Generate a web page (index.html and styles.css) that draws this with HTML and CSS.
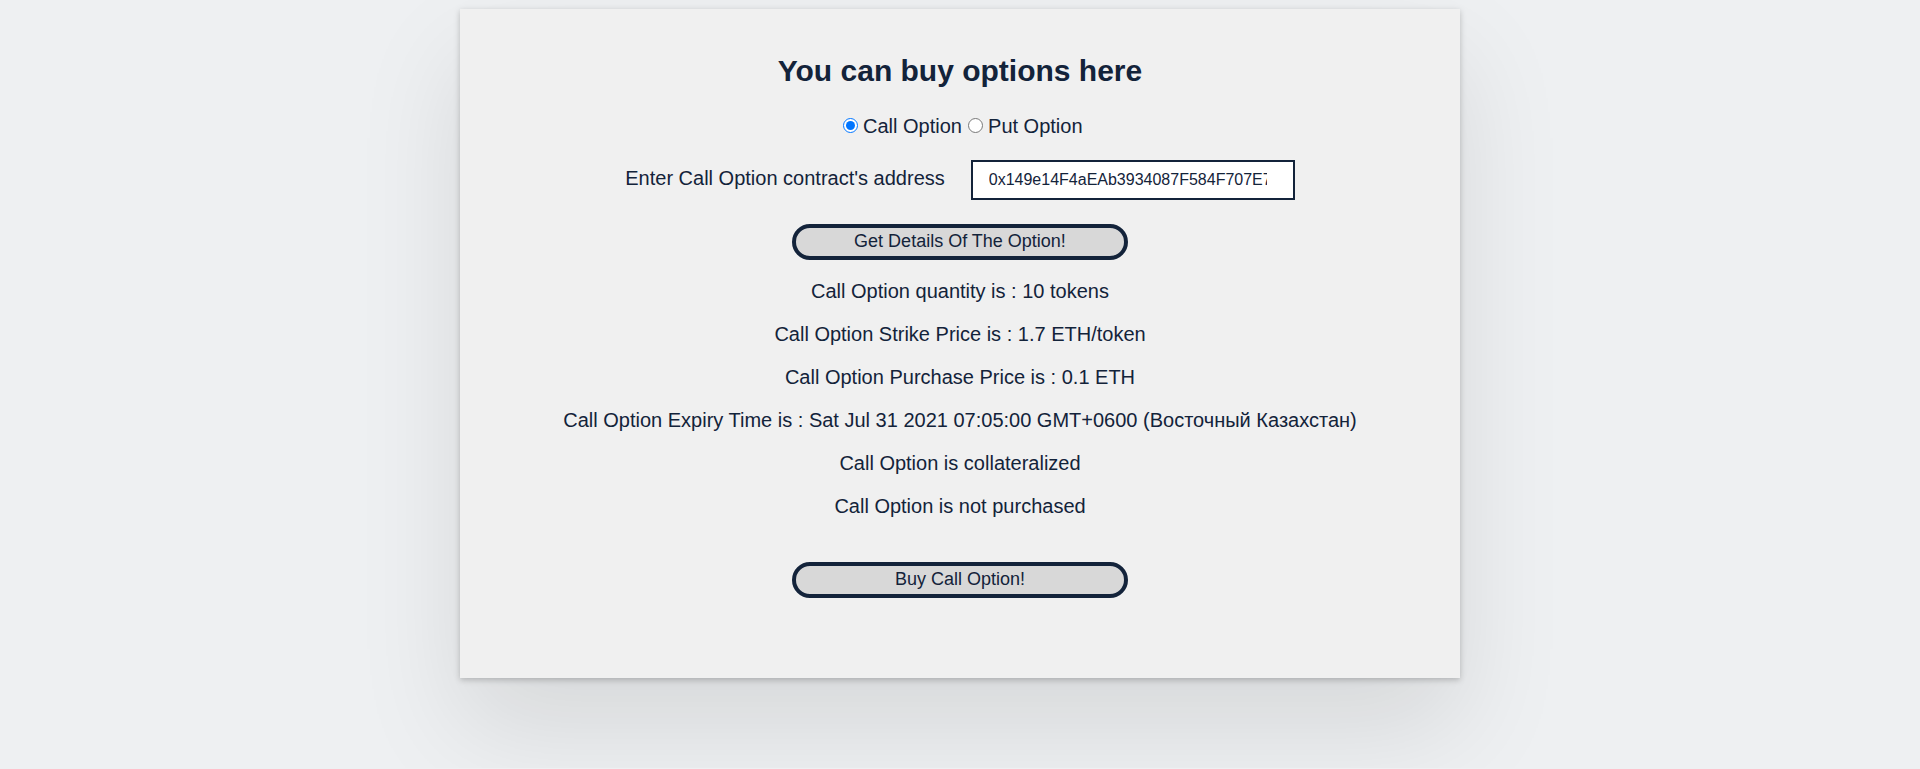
FILE: index.html
```html
<!DOCTYPE html>
<html lang="en">
<head>
<meta charset="utf-8">
<title>Buy options</title>
<link rel="stylesheet" href="styles.css">
</head>
<body>
<main class="card">
  <h1 class="title">You can buy options here</h1>
  <form class="form">
    <div class="choices">
      <input class="radio" type="radio" name="kind" id="call" checked>
      <label for="call">Call Option</label>
      <input class="radio" type="radio" name="kind" id="put">
      <label for="put">Put Option</label>
    </div>
    <div class="field">
      <label class="field-label" for="address">Enter Call Option contract's address</label>
      <input class="address" type="text" id="address" value="0x149e14F4aEAb3934087F584F707E7">
    </div>
    <button class="button" type="button">Get Details Of The Option!</button>
    <div class="details">
      <p>Call Option quantity is : 10 tokens</p>
      <p>Call Option Strike Price is : 1.7 ETH/token</p>
      <p>Call Option Purchase Price is : 0.1 ETH</p>
      <p>Call Option Expiry Time is : Sat Jul 31 2021 07:05:00 GMT+0600 (Восточный Казахстан)</p>
      <p>Call Option is collateralized</p>
      <p>Call Option is not purchased</p>
    </div>
    <button class="button" type="button">Buy Call Option!</button>
  </form>
</main>
</body>
</html>
```
FILE: styles.css
```css
* { box-sizing: border-box; }
body {
  margin: 0;
  padding: 9px 0 90px;
  background: #eef0f2;
  color: #13233a;
  font: 20px/23px "Liberation Sans", Arial, sans-serif;
}
.card {
  width: 1000px;
  max-width: 100%;
  margin: 0 auto;
  padding: 44px 24px 80px;
  background: #f0f0f0;
  text-align: center;
  box-shadow: 0 50px 100px rgba(0, 0, 0, 0.1), 0 2px 6px rgba(0, 0, 0, 0.22);
}
.title {
  margin: 0 0 26px;
  font-size: 30px;
  line-height: 36px;
}
.form {
  display: flex;
  flex-direction: column;
  align-items: center;
}
.choices {
  margin-bottom: 22px;
  padding-left: 5px;
}
.radio {
  width: 15px;
  height: 15px;
  margin: 3px -1px 1px 1px;
}
.field {
  display: flex;
  align-items: center;
  gap: 26px;
  margin-bottom: 24px;
}
.field-label { padding-bottom: 4px; }
.address {
  width: 324px;
  height: 40px;
  padding: 0 26px 0 16px;
  border: 2px solid #13233a;
  background: #fff;
  color: inherit;
  font: 16px "Liberation Sans", Arial, sans-serif;
}
.button {
  width: 336px;
  height: 36px;
  padding: 0 0 2px;
  border: 4px solid #13233a;
  border-radius: 18px;
  background: #d8d8d8;
  color: inherit;
  font: 18px "Liberation Sans", Arial, sans-serif;
}
.details {
  display: flex;
  flex-direction: column;
  gap: 20px;
  margin: 20px 0 44px;
}
.details p { margin: 0; }
```
